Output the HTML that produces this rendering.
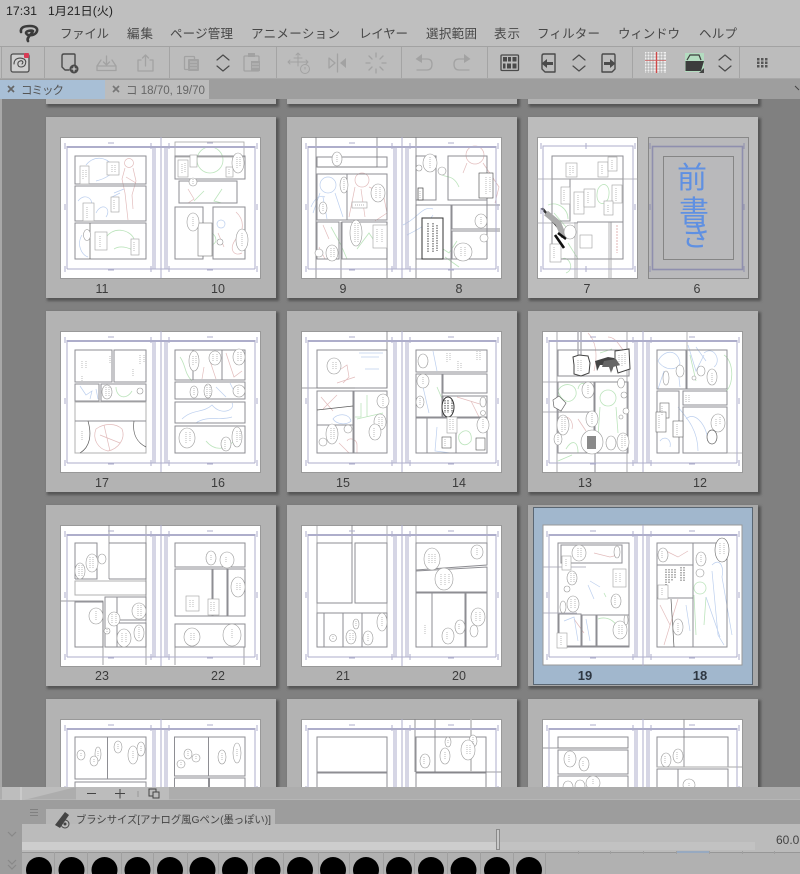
<!DOCTYPE html>
<html lang="ja"><head><meta charset="utf-8"><title>コミック</title>
<style>
html,body{margin:0;padding:0;width:800px;height:874px;overflow:hidden;background:#808080}
svg{display:block;position:absolute;left:0;top:0;font-family:"Liberation Sans","Noto Sans CJK JP",sans-serif;filter:blur(.35px)}
.p{fill:none;stroke:#8e8e93;stroke-width:1}
.pw{fill:#fff;stroke:#8e8e93;stroke-width:1}
.f{fill:none;stroke:#aeaecb;stroke-width:1}
.d{fill:none;stroke:#7c7c81;stroke-width:.8}
.k{fill:none;stroke:#5c5c5c;stroke-width:.7}
.b{fill:#fff;stroke:#9a9a9a;stroke-width:.6}
.bx{fill:#fff;stroke:#a0a0a0;stroke-width:.6}
.bk{fill:#fff;stroke:#333;stroke-width:1}
.r{fill:none;stroke:#e2bcbc;stroke-width:.7}
.g{fill:none;stroke:#bce4bc;stroke-width:.8}
.u{fill:none;stroke:#bccfee;stroke-width:.7}
.t{fill:none;stroke:#808080;stroke-width:.7;stroke-dasharray:.8 1.200}
.l{fill:#3c3c3c;font-size:12.500px;text-anchor:middle}
.m{fill:#474747;font-size:12.500px}
.i{fill:none;stroke:#4a4a4a;stroke-width:1.400;stroke-linecap:round;stroke-linejoin:round}
.o{fill:none;stroke:#a2a2a2;stroke-width:1.300;stroke-linecap:round;stroke-linejoin:round}
.c{fill:#000}
</style></head><body>
<svg width="800" height="874" viewBox="0 0 800 874" xmlns="http://www.w3.org/2000/svg">
<defs>
<filter id="s" x="-5%" y="-5%" width="110%" height="110%"><feGaussianBlur stdDeviation="1.200"/></filter>
<g id="card"><rect x="1" y="1" width="232" height="183" fill="#555" filter="url(#s)"/><rect x="0" y="0" width="230" height="181" fill="#b3b3b3"/></g>
<g id="pg"><rect x="14.500" y="20.500" width="200" height="141" fill="#fff" stroke="#999"/></g>
<g id="fr">
<path class="f" d="M21 29.500H209M21 30.500H209M21 152H209M107 29V152M109 29V152M119 29V152M121 29V152M21 29V152M209 29V152M115 20V161"/>
<path class="f" d="M19 26V32M105 26V32M123 26V32M211 26V32M19 149V155M105 149V155M123 149V155M211 149V155M62 26H68M161 26H167M62 153H68M161 153H167M19 87V93M211 87V93"/>
</g>
<g id="ch"><path class="i" d="M-6 -3L0 -8L6 -3M-6 3L0 8L6 3" style="stroke-width:1.200"/></g>
</defs>

<!-- canvas -->
<rect x="0" y="99" width="800" height="690" fill="#808080"/>
<rect x="0" y="99" width="2" height="690" fill="#a8a8a8"/>
<use href="#card" x="46" y="-77"/><use href="#card" x="287" y="-77"/><use href="#card" x="528" y="-77"/>

<!-- 11 / 10 -->
<g transform="translate(46,117)"><use href="#card"/><use href="#pg"/>
<path class="u" d="M40 48C48 38 60 40 66 48C72 56 58 62 50 64M68 76L78 72M32 84C40 74 50 84 44 92M50 96C56 84 66 92 60 100M36 118C30 128 36 138 42 140"/>
<circle class="r" cx="83" cy="46" r="4.500"/><path class="r" d="M79 51L76 62L79 76L82 103M87 51L90 64L86 78L87 92M80 60L90 66"/>
<path class="g" d="M60 120C70 108 85 114 88 122M68 132C74 128 86 130 92 138"/><path class="u" d="M66 80L74 76"/>
<rect class="p" x="29" y="39" width="71" height="28"/><rect class="p" x="29" y="69" width="71" height="35"/><rect class="p" x="29" y="106" width="71" height="36"/><path class="k" d="M44 106V142"/>
<rect class="bx" x="34" y="49" width="9" height="18"/><rect class="bx" x="61" y="45" width="12" height="13"/><rect class="bx" x="65" y="80" width="8" height="15"/><rect class="bx" x="37" y="86" width="11" height="18"/><rect class="bx" x="49" y="115" width="12" height="18"/><rect class="bx" x="85" y="122" width="8" height="16"/>
<ellipse class="b" cx="41" cy="118" rx="3.500" ry="5.500"/>
<path class="t" d="M37 53V63M40 53V61M66 48V55M69 48V55M68 83V92M41 90V101M54 119V130M88 125V135"/>
<circle class="g" cx="164" cy="43" r="13"/><path class="g" d="M148 84L158 74M176 72L168 84L176 86M160 118C164 112 170 118 170 124C166 132 158 128 160 118Z"/>
<path class="r" d="M190 95C198 102 199 114 190 122C182 132 188 140 196 136"/><circle class="u" cx="175" cy="107" r="4"/><path class="r" d="M142 72L148 82L142 86M172 116L178 130"/>
<rect class="d" x="129" y="25" width="69" height="15" style="stroke:#a5a5a5"/>
<rect class="p" x="129" y="39" width="70" height="23"/><rect class="p" x="133" y="64" width="58" height="22"/><rect class="p" x="129" y="90" width="28" height="52"/><rect class="p" x="167" y="90" width="32" height="52"/>
<rect class="bx" x="132" y="43" width="10" height="17"/><rect class="bx" x="144" y="38" width="7" height="12"/><rect class="bx" x="180" y="50" width="7" height="10"/><rect class="bx" x="152" y="106" width="14" height="33" style="stroke:#777"/>
<ellipse class="b" cx="192" cy="46" rx="6" ry="10"/><circle class="b" cx="147" cy="65" r="4"/><ellipse class="b" cx="147" cy="105" rx="6" ry="9"/><ellipse class="b" cx="196" cy="123" rx="6" ry="11"/><circle class="b" cx="174" cy="125" r="3"/>
<path class="t" d="M191 40V52M194 40V50M147 62V68M147 100V110M196 116V130M136 47V57M139 46V56M183 52V58"/>
<use href="#fr"/><text class="l" x="56" y="176">11</text><text class="l" x="172" y="176">10</text></g>

<!-- 9 / 8 -->
<g transform="translate(287,117)"><use href="#card"/><use href="#pg"/>
<circle class="u" cx="41" cy="68" r="8"/><path class="u" d="M33 76L26 96M48 76L56 100M36 80L40 102M24 90C28 80 34 78 38 80"/>
<circle class="r" cx="75" cy="63" r="7"/><path class="r" d="M68 70L62 100M82 70L96 76L100 96L88 104M74 72L78 100"/>
<path class="g" d="M44 110L54 128L60 142M70 132L82 116L90 128"/><path class="r" d="M36 108L42 122M32 130L38 142"/>
<rect class="p" x="30" y="40" width="70" height="10"/><rect class="p" x="30" y="57" width="70" height="46"/><path class="p" d="M60 57V103"/><rect class="p" x="30" y="105" width="22" height="37"/><rect class="p" x="55" y="105" width="45" height="37"/>
<path class="d" d="M29 20V161M54 105V161M90 20V50H30M100 105V161"/>
<ellipse class="b" cx="50" cy="42" rx="5" ry="7"/><ellipse class="b" cx="57" cy="68" rx="4" ry="8"/><ellipse class="b" cx="36" cy="91" rx="4" ry="6"/><ellipse class="b" cx="91" cy="76" rx="7" ry="9"/><ellipse class="b" cx="45" cy="136" rx="6" ry="8"/><circle class="b" cx="32" cy="136" r="4"/><ellipse class="b" cx="69" cy="116" rx="6" ry="13"/>
<rect class="bx" x="86" y="108" width="14" height="23"/><rect class="bx" x="65" y="85" width="15" height="6"/>
<path class="t" d="M50 38V46M57 62V74M36 87V95M89 70V82M93 70V82M44 131V141M47 131V141M68 106V126M71 106V126M90 112V126M95 112V126M68 88H78"/>
<circle class="r" cx="188" cy="38" r="9"/><path class="r" d="M180 46L176 56M196 46L212 70L208 86"/><path class="g" d="M152 56C158 62 166 56 172 70M150 128L162 136L170 124M158 140L172 150"/><path class="u" d="M116 108C130 102 136 88 146 92M120 118C132 112 140 108 146 98"/>
<rect class="p" x="129" y="39" width="20" height="44"/><rect class="p" x="161" y="39" width="39" height="44"/><rect class="p" x="129" y="88" width="35" height="54"/><path class="p" d="M213 88H165V112H213M213 114H165V142H200M200 39V142"/>
<path class="d" d="M129 20V161M164 142V161"/>
<ellipse class="b" cx="143" cy="46" rx="7" ry="9"/><circle class="b" cx="132" cy="51" r="3"/><circle class="b" cx="155" cy="54" r="4"/><rect class="bx" x="192" y="56" width="14" height="25" style="stroke:#444"/><rect x="135" y="101" width="21" height="41" fill="#fff" stroke="#333" stroke-width="1"/><rect x="131" y="71" width="5" height="12" fill="#fff" stroke="#444" stroke-width=".7"/>
<ellipse class="b" cx="194" cy="104" rx="6" ry="7"/><circle class="b" cx="197" cy="121" r="4"/><ellipse class="b" cx="176" cy="135" rx="9" ry="9"/>
<path class="t" d="M143 40V52M199 60V78M203 60V76M133 74V81M174 130V140M178 130V140M194 100V108"/>
<path d="M141 106V136M146 106V136M150 108V134" fill="none" stroke="#333" stroke-width=".9" stroke-dasharray="1.500 1"/>
<use href="#fr"/><text class="l" x="56" y="176">9</text><text class="l" x="172" y="176">8</text></g>

<!-- 7 / 6 -->
<g transform="translate(528,117)"><rect x="1" y="1" width="232" height="183" fill="#555" filter="url(#s)"/><rect width="230" height="181" fill="#bcbcbc"/>
<rect x="9.500" y="20.500" width="100" height="141" fill="#fff" stroke="#999"/><rect x="120.500" y="20.500" width="100" height="141" fill="#b9b9bb" stroke="#888"/>
<path class="g" d="M20 88C30 84 40 92 40 102M26 96L38 110M70 72C76 62 84 70 80 82C74 92 66 84 70 72M40 126L50 142M34 142C40 138 48 152 38 156"/>
<rect class="p" x="24" y="39" width="71" height="103"/><path class="p" d="M24 62H95M42 62V104H24M49 105H95M83 105V142"/>
<path class="d" d="M9 62H110M47 105V161M49 105V161M81 105V161M83 105V161M9 106H50" style="stroke:#a2a2a6"/>
<path d="M89 108V136" stroke="#e0b4b4" stroke-dasharray="2 1" fill="none"/>
<rect class="bx" x="38" y="46" width="11" height="14"/><rect class="bx" x="70" y="45" width="10" height="15"/><rect class="bx" x="80" y="40" width="9" height="14"/><rect class="bx" x="33" y="70" width="9" height="17"/><rect class="bx" x="46" y="75" width="10" height="22"/><rect class="bx" x="56" y="72" width="11" height="18"/><rect class="bx" x="84" y="68" width="10" height="18"/><rect class="bx" x="76" y="84" width="9" height="14"/><rect class="bx" x="52" y="118" width="12" height="13"/><rect class="bx" x="22" y="127" width="11" height="18"/>
<path class="t" d="M42 49V58M45 49V57M74 48V58M84 43V52M36 73V84M50 78V94M60 75V87M88 71V84M80 88V95M26 130V142"/>
<path d="M14 91L24 103L30 110" stroke="#333" stroke-width="2.500" fill="none"/><path d="M18 96L30 106L36 120" stroke="#aaa" stroke-width="6" fill="none"/><path d="M30 116L38 122M27 118L36 131" stroke="#111" stroke-width="2.600" fill="none"/><ellipse class="b" cx="42" cy="115" rx="6" ry="7"/>
<g class="f"><rect x="15" y="29" width="90" height="123"/><path d="M13 91V97M107 87V93M58 26V32M58 149V155M13 26V32M107 26V32M13 149V155M107 149V155"/></g>
<g style="stroke:#8f8fae;fill:none"><rect x="124.500" y="29.500" width="90" height="123" stroke-width="1.600"/><rect x="135.500" y="39.500" width="70" height="103" stroke="#858585"/><path d="M122 26V32M216 26V32M122 149V155M216 149V155M122 87V93M216 87V93"/></g>
<g fill="#5f90e2" font-size="30" text-anchor="middle" style="font-weight:400;font-family:'Noto Sans CJK JP','WenQuanYi Zen Hei',sans-serif"><text x="164" y="71">前</text><text x="166" y="105">書</text><text x="168" y="129">き</text></g>
<text class="l" x="59" y="176">7</text><text class="l" x="169" y="176">6</text></g>

<!-- 17 / 16 -->
<g transform="translate(46,311)"><use href="#card"/><use href="#pg"/>
<path class="u" d="M34 75L40 84L46 80L44 88M50 78L52 88"/><path class="g" d="M70 76C70 86 80 90 86 80"/><path class="r" d="M50 118C58 112 70 112 76 118C80 128 72 138 62 140C52 138 46 128 50 118ZM54 124L74 132M58 114L64 140"/>
<rect class="p" x="29" y="39" width="37" height="32"/><rect class="p" x="68" y="39" width="32" height="32"/><rect class="p" x="29" y="73" width="24" height="17"/><rect class="p" x="55" y="73" width="45" height="17"/><rect class="p" x="29" y="91" width="71" height="51" style="stroke:#b0b0b0"/>
<path class="p" d="M29 110H100"/><path class="k" d="M42 110C46 124 44 136 34 142M88 110C86 124 92 132 100 136"/>
<ellipse class="b" cx="61" cy="81" rx="5" ry="7"/><circle class="b" cx="94" cy="80" r="3"/>
<path class="t" d="M36 50V58M40 50V58M64 45V52M94 44V54M98 44V52M87 58V66M36 65V70M60 76V86M63 76V86M36 120V130"/>
<path class="u" d="M136 108C146 98 158 102 166 94C176 106 190 98 186 92M150 112C160 104 176 110 186 106"/><path class="g" d="M134 46C140 54 138 62 146 70M160 130C170 142 184 138 190 126"/><path class="r" d="M158 56L156 68M164 50L170 68M180 42L188 66L196 60"/><path class="u" d="M170 76L180 86M184 72L190 84"/>
<rect class="p" x="129" y="39" width="70" height="30"/><path class="p" d="M147 39V69M176 39V69"/><rect class="p" x="129" y="71" width="70" height="17"/><rect class="p" x="129" y="91" width="70" height="21"/><rect class="p" x="129" y="115" width="70" height="27"/>
<ellipse class="b" cx="148" cy="50" rx="5" ry="10"/><ellipse class="b" cx="169" cy="47" rx="6" ry="7"/><ellipse class="b" cx="193" cy="46" rx="6" ry="8"/><ellipse class="b" cx="148" cy="81" rx="4" ry="6"/><ellipse class="b" cx="162" cy="80" rx="4" ry="7"/><ellipse class="b" cx="193" cy="80" rx="6" ry="6"/><ellipse class="b" cx="141" cy="127" rx="8" ry="10"/><ellipse class="b" cx="191" cy="126" rx="5" ry="10"/><ellipse class="b" cx="180" cy="133" rx="5" ry="7"/>
<path class="t" d="M147 45V55M150 45V53M167 43V51M171 43V51M192 41V50M195 41V50M148 77V85M161 74V85M164 74V85M192 76V84M140 121V132M144 121V130M191 120V132M194 120V130M179 129V138"/>
<use href="#fr"/><text class="l" x="56" y="176">17</text><text class="l" x="172" y="176">16</text></g>

<!-- 15 / 14 -->
<g transform="translate(287,311)"><use href="#card"/><use href="#pg"/>
<path class="r" d="M54 58L60 54L62 66L56 72M50 72L68 66M34 86L46 100M50 84L36 98"/><path class="u" d="M46 108C50 102 62 102 64 110C60 114 50 114 46 108Z"/><path class="g" d="M74 92V106H68M80 84V106M70 108L96 102"/><path class="r" d="M60 130C62 126 70 128 70 134V142M52 132L62 142"/><path class="u" d="M72 42H96M74 46H92M78 58H92"/>
<rect class="p" x="30" y="39" width="70" height="38"/><rect class="p" x="30" y="80" width="36" height="62"/><path class="k" d="M30 99L66 95"/><path class="p" d="M30 114H66"/><rect class="p" x="67" y="80" width="33" height="62"/>
<path class="d" d="M15 77H68M100 20V77"/>
<ellipse class="b" cx="47" cy="55" rx="7" ry="8"/><ellipse class="b" cx="96" cy="90" rx="6" ry="7"/><ellipse class="b" cx="93" cy="111" rx="6" ry="8"/><ellipse class="b" cx="88" cy="121" rx="6" ry="8"/><ellipse class="b" cx="45" cy="123" rx="6" ry="10"/><circle class="b" cx="36" cy="131" r="4"/><circle class="b" cx="61" cy="118" r="4"/>
<path class="t" d="M46 51V59M49 51V59M96 86V95M92 106V116M95 106V116M87 117V126M44 117V129M47 117V129"/>
<path class="u" d="M146 40L150 60M136 76L142 102M150 116L148 140L164 142"/><path class="g" d="M150 76L156 90M172 124C178 116 186 120 184 130C178 138 170 132 172 124Z"/><path class="r" d="M170 86L196 94M184 90L192 106"/>
<rect class="p" x="129" y="39" width="71" height="22"/><rect class="p" x="129" y="63" width="26" height="43"/><rect class="p" x="156" y="63" width="44" height="19"/><rect class="p" x="156" y="85" width="44" height="21"/><rect class="p" x="129" y="107" width="11" height="35"/><rect class="p" x="140" y="107" width="29" height="35"/><rect class="p" x="169" y="107" width="31" height="35"/>
<ellipse class="b" cx="136" cy="70" rx="6" ry="7"/><ellipse class="b" cx="133" cy="91" rx="4" ry="6"/><ellipse cx="161" cy="96" rx="6" ry="10" class="bk"/><ellipse class="b" cx="196" cy="91" rx="3" ry="5"/><ellipse class="b" cx="196" cy="114" rx="6" ry="8"/><ellipse class="b" cx="136" cy="50" rx="5" ry="7"/><circle class="b" cx="196" cy="102" r="2.500"/>
<rect class="bx" x="160" y="106" width="10" height="16"/><rect class="bx" x="155" y="126" width="9" height="11" style="stroke:#555"/><rect class="bx" x="189" y="127" width="9" height="12" style="stroke:#555"/>
<path class="t" d="M163 108V120M166 108V120M196 108V118M158 128V135M160 42V52M163 42V50M190 40V50M193 40V50M171 50V60M174 52V58M136 66V74M133 87V95"/>
<path d="M158 89V102M161 89V102M165 89V102" fill="none" stroke="#333" stroke-width=".9" stroke-dasharray="1.500 1"/>
<use href="#fr"/><text class="l" x="56" y="176">15</text><text class="l" x="172" y="176">14</text></g>

<!-- 13 / 12 -->
<g transform="translate(528,311)"><use href="#card"/><use href="#pg"/>
<circle class="g" cx="80" cy="87" r="8"/><path class="g" d="M72 96L70 126M88 96L90 122M30 80C34 70 50 72 48 84C44 94 34 92 30 80ZM50 78C52 68 62 72 62 84M38 138C44 128 50 130 50 142M30 150L44 144"/><path class="r" d="M60 22C68 30 70 44 66 60M50 108L58 120M30 108C40 102 46 110 44 118M80 26C88 26 92 36 96 40"/><path class="g" d="M72 42L84 38"/>
<rect class="p" x="30" y="39" width="71" height="26"/><rect class="p" x="30" y="71" width="36" height="30"/><rect class="p" x="67" y="71" width="33" height="71"/><rect class="p" x="30" y="101" width="36" height="41"/>
<path class="d" d="M29 20V161M99 20V161M15 71H66M15 101H66" style="stroke:#97979c"/><path d="M50 20V55M53 20V55M67 142V161" stroke="#a8a8ae" fill="none" stroke-width="1.300"/>
<path fill="#fff" stroke="#444" d="M45 46L51 44L60 45L62 52L61 62L53 65L46 63L46 54Z"/><path fill="#fff" stroke="#444" d="M87 40L101 38L102 58L90 62L87 50Z"/>
<path fill="#444" d="M67 50L80 46L86 47L90 54L86 54L84 60L82 54L72 54L69 60L68 54Z"/><path fill="#666" d="M76 50L88 48L92 54L85 56L83 62L81 56L74 56Z"/>
<ellipse class="b" cx="60" cy="79" rx="6" ry="8"/><ellipse class="b" cx="93" cy="72" rx="3.500" ry="5"/><circle class="b" cx="96" cy="84" r="3"/><circle class="b" cx="98" cy="100" r="3"/><circle class="b" cx="93" cy="106" r="2"/><ellipse class="b" cx="64" cy="108" rx="6" ry="8"/><ellipse class="b" cx="35" cy="114" rx="6" ry="10"/><ellipse class="b" cx="30" cy="128" rx="4" ry="6"/><ellipse class="b" cx="64" cy="131" rx="11" ry="12"/><ellipse class="b" cx="83" cy="132" rx="5" ry="7"/><ellipse class="b" cx="95" cy="131" rx="6" ry="9"/>
<path fill="#fff" stroke="#666" stroke-width=".7" d="M31 85L38 92L33 100L26 96L25 89Z"/>
<path class="t" d="M50 49V60M53 49V60M91 44V56M94 44V56M97 42V54M60 74V84M64 102V114M34 106V122M37 106V120M30 124V132M94 124V138M97 124V136"/><rect x="59" y="125" width="9" height="13" fill="#8a8a8a"/>
<path class="u" d="M130 50C136 38 150 38 152 52C150 60 136 60 130 50ZM136 60L130 78M150 58L152 76M160 34L168 60L176 44M168 36L178 50M132 130C136 124 144 128 142 136"/><path class="u" d="M158 108C166 100 178 112 180 130M150 96C160 108 170 120 170 140"/><path class="g" d="M162 44L168 70M196 44C206 50 206 74 198 80"/><path class="u" d="M176 42C186 34 194 50 186 56"/>
<rect class="p" x="129" y="39" width="29" height="39"/><rect class="p" x="159" y="39" width="40" height="39"/><rect class="p" x="129" y="80" width="22" height="62"/><rect class="p" x="155" y="80" width="44" height="14"/><rect class="p" x="155" y="96" width="44" height="46"/>
<path class="d" d="M159 20V40M199 142H214" style="stroke:#a2a2a6"/>
<ellipse class="b" cx="152" cy="60" rx="4" ry="6"/><ellipse class="b" cx="173" cy="60" rx="4" ry="5"/><ellipse class="b" cx="184" cy="66" rx="5" ry="8"/><circle class="b" cx="166" cy="67" r="2"/><ellipse class="b" cx="138" cy="67" rx="3" ry="7"/><ellipse class="b" cx="190" cy="112" rx="7" ry="9"/><ellipse cx="184" cy="126" rx="5" ry="7" fill="#fff" stroke="#666" stroke-width=".7"/>
<rect class="bx" x="132" y="92" width="9" height="15" style="stroke:#666"/><rect class="bx" x="128" y="101" width="10" height="20" style="stroke:#666"/><rect class="bx" x="145" y="110" width="10" height="16" style="stroke:#666"/>
<path class="t" d="M158 84V91M161 84V91M134 95V104M131 104V118M149 113V124M188 108V116M192 106V114M184 62V72"/>
<use href="#fr"/><text class="l" x="57" y="176">13</text><text class="l" x="172" y="176">12</text></g>

<!-- 23 / 22 -->
<g transform="translate(46,505)"><use href="#card"/><use href="#pg"/>
<path class="p" d="M29 74V38H51V74H29M63 74H100V38H63"/><rect class="p" x="29" y="76" width="71" height="14" style="stroke:#b0b0b0"/><rect class="p" x="29" y="97" width="28" height="45"/><rect class="p" x="59" y="92" width="12" height="50"/><rect class="p" x="71" y="92" width="29" height="23"/><rect class="p" x="71" y="118" width="29" height="24"/>
<path class="d" d="M63 20V74M15 96H57V160M100 20V160" style="stroke-width:.7"/>
<ellipse class="b" cx="46" cy="58" rx="6" ry="9"/><ellipse class="b" cx="56" cy="54" rx="4" ry="5"/><ellipse class="b" cx="34" cy="66" rx="5" ry="8"/><ellipse class="b" cx="50" cy="111" rx="7" ry="8"/><ellipse class="b" cx="68" cy="114" rx="6" ry="7"/><circle class="b" cx="61" cy="126" r="3"/><ellipse class="b" cx="78" cy="133" rx="7" ry="9"/><ellipse class="b" cx="93" cy="128" rx="5" ry="8"/><ellipse class="b" cx="93" cy="106" rx="7" ry="8"/>
<path class="t" d="M44 52V64M47 52V64M33 60V72M36 60V72M50 106V116M66 109V119M70 109V119M76 128V138M80 128V138M93 122V134M92 100V112M95 100V112M61 124V128"/>
<rect class="p" x="129" y="38" width="70" height="24"/><rect class="p" x="129" y="64" width="37" height="47"/><rect class="p" x="167" y="64" width="14" height="47"/><rect class="p" x="182" y="64" width="17" height="47"/><rect class="p" x="129" y="119" width="70" height="23"/>
<path class="d" d="M129 142V160M198 142V160" style="stroke-width:.7"/>
<ellipse class="b" cx="165" cy="53" rx="5" ry="7"/><ellipse class="b" cx="181" cy="55" rx="7" ry="8"/><ellipse class="b" cx="192" cy="82" rx="7" ry="10"/><ellipse class="b" cx="146" cy="132" rx="8" ry="9"/><ellipse class="b" cx="186" cy="130" rx="9" ry="11"/>
<rect class="bx" x="140" y="91" width="13" height="15"/><rect class="bx" x="162" y="94" width="11" height="16"/>
<path class="t" d="M165 50V56M180 52V58M191 78V86M194 78V86M145 128V136M148 128V136M186 124V134M144 95V102M147 95V102M165 97V107M168 97V107"/>
<use href="#fr"/><text class="l" x="56" y="175">23</text><text class="l" x="172" y="175">22</text></g>

<!-- 21 / 20 -->
<g transform="translate(287,505)"><use href="#card"/><use href="#pg"/>
<rect class="p" x="30" y="38" width="35" height="60"/><rect class="p" x="68" y="38" width="32" height="60"/><rect class="p" x="30" y="108" width="7" height="34"/><rect class="p" x="37" y="108" width="19" height="34"/><rect class="p" x="56" y="108" width="19" height="34"/><rect class="p" x="75" y="108" width="25" height="34"/>
<path class="d" d="M65 20V38"/><path d="M30 20V108M100 20V108" stroke="#8f8f94" fill="none" stroke-width=".7"/>
<circle class="b" cx="46" cy="133" r="3.500"/><ellipse class="b" cx="69" cy="119" rx="3" ry="5"/><ellipse class="b" cx="64" cy="132" rx="5" ry="7"/><ellipse class="b" cx="81" cy="133" rx="5" ry="7"/><ellipse class="b" cx="95" cy="117" rx="5" ry="9"/>
<path class="t" d="M46 131V135M69 116V122M63 128V136M66 128V136M81 129V137M95 112V122"/>
<path class="p" d="M129 38H200V60L129 65ZM129 66L200 62V87H129Z"/><rect class="p" x="129" y="88" width="16" height="54"/><rect class="p" x="145" y="88" width="33" height="54"/><rect class="p" x="179" y="88" width="21" height="54"/>
<path d="M129 20V38M200 20V38" stroke="#8f8f94" fill="none" stroke-width=".7"/>
<ellipse class="b" cx="145" cy="54" rx="8" ry="11"/><ellipse class="b" cx="157" cy="74" rx="9" ry="11"/><ellipse class="b" cx="190" cy="47" rx="6" ry="7"/><ellipse class="b" cx="191" cy="112" rx="7" ry="9"/><ellipse class="b" cx="187" cy="126" rx="4" ry="6"/><ellipse class="b" cx="173" cy="122" rx="5" ry="7"/><ellipse class="b" cx="161" cy="131" rx="6" ry="8"/>
<path class="t" d="M142 49V59M145 49V59M148 49V59M154 69V80M158 69V80M162 69V78M190 43V51M189 107V117M193 107V117M172 119V125M160 127V135M138 120V130"/>
<use href="#fr"/><text class="l" x="56" y="175">21</text><text class="l" x="172" y="175">20</text></g>

<!-- 19 / 18 selected -->
<g transform="translate(528,505)"><rect x="1" y="1" width="232" height="183" fill="#555" filter="url(#s)"/><rect width="230" height="181" fill="#a8a8a8"/><rect x="5.500" y="2.500" width="219" height="177" fill="#a1b7cd" stroke="#5a6672"/>
<rect x="15" y="20" width="199" height="140" fill="#fff" stroke="#999"/>
<path class="u" d="M60 80L66 94M62 76L72 82"/><path class="g" d="M70 114C80 110 92 118 90 130M76 88L78 92"/><path class="r" d="M66 48L82 52L90 50M46 114L56 128"/><path class="u" d="M36 116L46 112L50 136M58 114L62 136"/>
<rect class="p" x="30" y="38" width="71" height="104"/><rect class="p" x="33" y="40" width="61" height="18"/><rect class="p" x="31" y="109" width="22" height="32"/><rect class="p" x="54" y="110" width="14" height="31"/><rect class="p" x="69" y="110" width="32" height="31"/>
<path class="d" d="M15 62H58M15 108H49" style="stroke:#a0a0b0"/>
<ellipse class="b" cx="51" cy="48" rx="7" ry="8"/><ellipse class="b" cx="89" cy="47" rx="3" ry="6"/><ellipse class="b" cx="44" cy="73" rx="5" ry="7"/><circle class="b" cx="39" cy="84" r="3"/><ellipse class="b" cx="45" cy="99" rx="6" ry="8"/><ellipse class="b" cx="35" cy="102" rx="3" ry="6"/><ellipse class="b" cx="88" cy="96" rx="5" ry="7"/><ellipse class="b" cx="92" cy="125" rx="7" ry="9"/><ellipse class="b" cx="98" cy="115" rx="2" ry="5"/>
<rect class="bx" x="34" y="51" width="9" height="14"/><rect class="bx" x="85" y="64" width="13" height="18"/><rect class="bx" x="29" y="128" width="10" height="15"/>
<path class="t" d="M50 43V52M53 43V52M38 54V62M88 68V78M92 68V78M43 68V78M46 68V78M43 94V104M47 94V104M87 91V101M91 120V130M94 120V130M33 131V140"/>
<circle class="g" cx="172" cy="83" r="6"/><path class="r" d="M132 100L142 120M150 94L136 140M138 46L150 52L160 46"/><path class="g" d="M166 90L168 130M178 92L176 120"/>
<path class="u" d="M184 60C192 52 196 62 194 72L204 130M184 66L190 130L196 140M178 92L192 132M158 100L162 126"/>
<rect class="p" x="129" y="38" width="70" height="104"/><path class="p" d="M165 38V142M129 60H165M129 93H165"/><path class="k" d="M143 94L146 142"/>
<ellipse class="b" cx="135" cy="50" rx="5" ry="7"/><ellipse class="b" cx="173" cy="54" rx="5" ry="7"/><circle class="b" cx="172" cy="68" r="4"/><ellipse class="b" cx="194" cy="45" rx="7" ry="12" style="stroke:#666"/><ellipse class="b" cx="150" cy="122" rx="5" ry="8"/>
<rect class="bx" x="130" y="80" width="10" height="14"/>
<path d="M138 64V80M141 64V78M144 64V76M147 64V74M153 62V76M156 62V76" stroke="#444" stroke-dasharray="1.500 1" fill="none" stroke-width=".8"/>
<path class="t" d="M134 46V54M173 50V58M192 38V50M196 38V50M150 118V128M134 83V91"/>
<use href="#fr"/><g font-weight="700" fill="#2e3742" font-size="13" text-anchor="middle"><text x="57" y="175">19</text><text x="172" y="175">18</text></g></g>

<!-- row 4 -->
<g transform="translate(46,699)"><use href="#card"/><use href="#pg"/>
<rect class="p" x="29" y="38" width="32.500" height="42"/><rect class="p" x="61.500" y="38" width="38.500" height="42"/><rect class="p" x="29" y="83" width="71" height="30"/>
<rect class="p" x="128.500" y="38" width="34" height="39"/><rect class="p" x="162.500" y="38" width="36.500" height="39"/><rect class="p" x="128.500" y="79" width="34" height="30"/><rect class="p" x="163.500" y="79" width="35.500" height="30"/>
<ellipse class="b" cx="35" cy="56" rx="4" ry="5"/><ellipse class="b" cx="52" cy="55" rx="3" ry="7"/><ellipse class="b" cx="48" cy="62" rx="4" ry="5"/><ellipse class="b" cx="72" cy="48" rx="4" ry="6"/><ellipse class="b" cx="87" cy="56" rx="5" ry="9"/><ellipse class="b" cx="95" cy="50" rx="4" ry="7"/><ellipse class="b" cx="142" cy="55" rx="4" ry="5"/><circle class="b" cx="150" cy="59" r="4"/><circle class="b" cx="135" cy="65" r="4"/><ellipse class="b" cx="176" cy="58" rx="4" ry="7"/><ellipse class="b" cx="191" cy="54" rx="4" ry="10"/>
<path class="t" d="M35 54V58M52 52V58M48 60V64M72 45V51M87 52V60M95 47V53M142 52V58M150 57V61M135 63V67M176 54V62M191 50V58"/>
<use href="#fr"/></g>
<g transform="translate(287,699)"><use href="#card"/><use href="#pg"/>
<rect class="p" x="30" y="38" width="70" height="35"/><rect class="p" x="30" y="74" width="70" height="40"/>
<rect class="p" x="129" y="38" width="70" height="35"/><rect class="p" x="129" y="74" width="70" height="40"/>
<path class="d" d="M148 20V73M128 20V73M129 73H214"/><path d="M184 20V73" stroke="#bbb" fill="none" stroke-width="1.500"/>
<ellipse class="b" cx="161" cy="43" rx="3" ry="5"/><ellipse class="b" cx="186" cy="42" rx="4" ry="6"/><ellipse class="b" cx="181" cy="51" rx="7" ry="10"/><ellipse class="b" cx="158" cy="57" rx="5" ry="8"/><ellipse class="b" cx="138" cy="62" rx="5" ry="7"/>
<path class="t" d="M161 41V45M186 38V46M180 46V56M183 46V56M158 53V61M137 58V66"/>
<use href="#fr"/></g>
<g transform="translate(528,699)"><use href="#card"/><use href="#pg"/>
<rect class="p" x="30" y="38" width="70" height="11"/><rect class="p" x="30" y="51" width="70" height="24"/><rect class="p" x="30" y="77" width="70" height="30"/>
<rect class="p" x="129" y="38" width="71" height="30"/><rect class="p" x="129" y="70" width="21" height="30"/><rect class="p" x="150" y="70" width="50" height="30"/>
<path class="d" d="M15 49H100M156 20V68"/><path d="M129 68H214" stroke="#aaa" fill="none"/>
<ellipse class="b" cx="42" cy="60" rx="6" ry="8"/><ellipse class="b" cx="56" cy="65" rx="5" ry="7"/><ellipse class="b" cx="65" cy="84" rx="7" ry="7"/><ellipse class="b" cx="52" cy="87" rx="5" ry="6"/><ellipse class="b" cx="40" cy="88" rx="5" ry="6"/><ellipse class="b" cx="138" cy="61" rx="5" ry="7"/><ellipse class="b" cx="150" cy="57" rx="5" ry="7"/><circle class="b" cx="161" cy="86" r="6"/>
<path class="t" d="M41 56V64M55 62V68M65 80V86M137 57V65M149 53V61M161 84V88"/>
<use href="#fr"/></g>

<!-- top bars -->
<rect x="0" y="0" width="800" height="46" fill="#bfbfbf"/>
<text x="6" y="15" font-size="11.500" fill="#222" textLength="31" lengthAdjust="spacingAndGlyphs">17:31</text>
<text x="48" y="15" font-size="11.500" fill="#222" textLength="65" lengthAdjust="spacingAndGlyphs">1月21日(火)</text>
<path d="M21 32C20 27 25 26 30 26C36 26 39 29 36 33C33 36 27 36 26 33C26 31 31 30 33 31C31 35 26 38 28 41" fill="none" stroke="#3b3b3b" stroke-width="2.600" stroke-linecap="round" stroke-linejoin="round"/>
<g class="m">
<text x="60" y="38" textLength="49" lengthAdjust="spacing">ファイル</text>
<text x="127" y="38" textLength="26">編集</text>
<text x="170" y="38" textLength="63">ページ管理</text>
<text x="251" y="38" textLength="89">アニメーション</text>
<text x="359" y="38" textLength="49">レイヤー</text>
<text x="426" y="38" textLength="51">選択範囲</text>
<text x="494" y="38" textLength="26">表示</text>
<text x="537" y="38" textLength="63">フィルター</text>
<text x="618" y="38" textLength="62">ウィンドウ</text>
<text x="699" y="38" textLength="38">ヘルプ</text>
</g>

<!-- toolbar -->
<rect x="0" y="46" width="800" height="33" fill="#bcbcbc"/>
<rect x="0" y="46" width="800" height="1" fill="#a2a2a2"/>
<rect x="0" y="78" width="800" height="1" fill="#a8a8a8"/>
<path d="M1.500 47V78M44.500 47V78M169.500 47V78M276.500 47V78M401.500 47V78M487.500 47V78M632.500 47V78M739.500 47V78" stroke="#a4a4a4" fill="none"/>
<!-- app icon -->
<rect x="11" y="54" width="18" height="18" rx="2" fill="#d0d0d0" stroke="#4d4d4d" stroke-width="1.300"/>
<path class="i" style="stroke-width:1.100" d="M14 64C14 58 20 57 24 59C27 61 26 67 21 67C17 67 17 62 20 61C22 60 24 62 22 64"/>
<rect x="24" y="53" width="5" height="5" rx="1" fill="#d83c56"/>
<!-- new page -->
<path class="i" d="M64 54H74Q75 54 75 55V65M62 56V67L65 70H69M62 56Q62 54 64 54"/>
<circle cx="74" cy="69" r="4.500" fill="#4a4a4a"/><path d="M71.500 69H76.500M74 66.500V71.500" stroke="#ddd" stroke-width="1.100"/>
<!-- inbox -->
<path class="o" d="M101 60L97 66V70.500H116V66L112 60M97 66H116M106.500 56V64M103.500 62L106.500 65L109.500 62"/>
<!-- share -->
<path class="o" d="M141 60H138V71H153V60H150M145.500 66V55M142.500 58L145.500 55L148.500 58"/>
<!-- copy -->
<rect x="184.500" y="56.500" width="10" height="13" rx="1" fill="none" stroke="#a2a2a2" stroke-width="1.300"/><rect x="188" y="59" width="11" height="12" rx="1" fill="#a2a2a2"/><path d="M190 62H197M190 65H197M190 68H197" stroke="#bcbcbc"/>
<use href="#ch" x="223" y="63"/>
<!-- clipboard -->
<rect x="244" y="56" width="15" height="15" rx="1" fill="none" stroke="#a2a2a2" stroke-width="1.300"/><rect x="248" y="53" width="7" height="4" fill="#a2a2a2"/><rect x="251" y="61" width="9" height="10" fill="#a2a2a2"/><path d="M252 64H259M252 67H259" stroke="#bcbcbc"/>
<!-- move -->
<path class="o" style="stroke-width:1" d="M298 53V66M288 62H308M296 55L298 53L300 55M290 60L288 62L290 64M306 60L308 62L306 64M294 58H302"/>
<circle cx="305" cy="69" r="4.500" fill="none" stroke="#a2a2a2"/><path d="M305 67V69.500" stroke="#a2a2a2"/>
<!-- flip -->
<path class="o" d="M337.500 54V72M329 58L335 63L329 68Z"/><path d="M346 58L340 63L346 68Z" fill="#a2a2a2"/>
<!-- spinner -->
<path class="o" d="M376 53V57M376 69V73M366 63H370M382 63H386M369 56L372 59M380 67L383 70M383 56L380 59M372 67L369 70"/>
<!-- undo / redo -->
<path class="o" d="M419 59H427Q432 59 432 64Q432 70 427 70H417"/><path d="M422 54L415.500 59L422 63Z" fill="#a2a2a2"/>
<path class="o" d="M467 59H459Q454 59 454 64Q454 70 459 70H469"/><path d="M464 54L470.500 59L464 63Z" fill="#a2a2a2"/>
<!-- page layout -->
<rect x="501" y="55" width="17.500" height="15.500" rx="1" fill="none" stroke="#4a4a4a" stroke-width="1.300"/><path fill="#4a4a4a" d="M503 57H507V61.500H503ZM508 57H511V61.500H508ZM512.500 57H516.500V61.500H512.500ZM503 63.500H505.500V68.500H503ZM507 63.500H511V68.500H507ZM512.500 63.500H516.500V68.500H512.500Z"/>
<!-- page left -->
<path class="i" d="M544 54H555V72H545L542 69V56Q542 54 544 54Z"/><path d="M553 62H547V59L541.500 63.500L547 68V65H553Z" fill="#4a4a4a"/>
<use href="#ch" x="579" y="63"/>
<!-- page right -->
<path class="i" d="M603 54H614Q615 54 615 56V69L612 72H602V56Q602 54 603 54Z"/><path d="M604 62H610V59L615.500 63.500L610 68V65H604Z" fill="#4a4a4a"/>
<!-- red grid -->
<rect x="645" y="52" width="21" height="21" fill="#efefef"/>
<path d="M645 54H666M645 57H666M645 60H666M645 63H666M645 66H666M645 69H666M645 72H666M647 52V73M650 52V73M653 52V73M660 52V73M663 52V73" stroke="#8a8a8a" stroke-width=".6" fill="none"/><path d="M656.500 52V73" stroke="#d04848" stroke-width="1.400"/><path d="M645 60.500H666" stroke="#d06060" stroke-width=".8"/>
<!-- folder -->
<rect x="685" y="53" width="19" height="19" fill="#b3dcc0"/>
<path d="M687 60L690 55H699L701 60" fill="none" stroke="#3c3c3c" stroke-width="1.200"/><path d="M685.500 61H704L701 71H685.500Z" fill="#3c3c3c"/><path d="M704 73H699L704 68Z" fill="#444"/>
<use href="#ch" x="725" y="63"/>
<!-- dots -->
<g fill="#565656"><rect x="757" y="58" width="2.500" height="2.500"/><rect x="761" y="58" width="2.500" height="2.500"/><rect x="765" y="58" width="2.500" height="2.500"/><rect x="757" y="61.500" width="2.500" height="2.500"/><rect x="761" y="61.500" width="2.500" height="2.500"/><rect x="765" y="61.500" width="2.500" height="2.500"/><rect x="757" y="65" width="2.500" height="2.500"/><rect x="761" y="65" width="2.500" height="2.500"/><rect x="765" y="65" width="2.500" height="2.500"/></g>

<!-- tabs -->
<rect x="0" y="79" width="800" height="20" fill="#9e9e9e"/>
<rect x="0" y="80" width="105" height="19" fill="#a8bfd6"/>
<rect x="105" y="80" width="104" height="19" fill="#bcbcbc"/>
<path d="M8 86L14 92M14 86L8 92" stroke="#666" stroke-width="1.700"/><path d="M113 86L119 92M119 86L113 92" stroke="#777" stroke-width="1.700"/>
<text x="21" y="94" font-size="11.500" fill="#555" textLength="43">コミック</text>
<text x="126" y="94" font-size="11.500" fill="#666" textLength="79" lengthAdjust="spacingAndGlyphs">コ 18/70, 19/70</text>
<path d="M795 86L799 90" stroke="#444" fill="none"/>

<!-- bottom bars -->
<rect x="0" y="787" width="800" height="13" fill="#adadad"/>
<rect x="0" y="799" width="800" height="1" fill="#b6b6b6"/>
<path d="M2 787H76L24 800H2Z" fill="#bdbdbd"/><path d="M20 787H22V800H20Z" fill="#cacaca"/>
<rect x="76" y="787" width="93" height="13" fill="#bcbcbc"/>
<path d="M87 793.500H96M115 793.500H125M120 789V798.500" stroke="#444" stroke-width="1" fill="none"/><path d="M138 791V797" stroke="#999"/>
<rect x="149" y="789" width="7" height="7" fill="none" stroke="#444"/><rect x="153" y="792" width="6" height="6" fill="#bcbcbc" stroke="#444"/>
<rect x="0" y="800" width="800" height="74" fill="#9d9d9d"/>
<rect x="22" y="824" width="778" height="28" fill="#bbbbbb"/>
<path d="M30 809.500H38M30 812.500H38M30 815.500H38" stroke="#808080" stroke-width="1"/>
<rect x="46" y="809" width="229" height="15" fill="#b8b8b8"/>
<path d="M55 825L65 812L69 815L60 828Z" fill="#444"/><circle cx="65" cy="824" r="4" fill="none" stroke="#444"/><circle cx="65" cy="824" r="1.500" fill="#444"/>
<text x="76" y="823" font-size="10.500" fill="#444" textLength="195" lengthAdjust="spacingAndGlyphs">ブラシサイズ[アナログ風Gペン(墨っぽい)]</text>
<path d="M8 832L12 836L16 832" stroke="#888" fill="none" stroke-width="1.200"/>
<path d="M8 860L12 864L16 860M8 865L12 869L16 865" stroke="#888" fill="none" stroke-width="1.200"/>
<rect x="22" y="842" width="733" height="8" fill="#c2c2c2"/>
<rect x="22" y="842" width="474" height="8" fill="#cdcdcd"/>
<rect x="496.500" y="829.500" width="3" height="20" fill="#c8c8c8" stroke="#8a8a8a"/>
<text x="776" y="844" font-size="12" fill="#444">60.0</text>
<rect x="22" y="852" width="778" height="22" fill="#b1b1b1"/>
<rect x="22" y="852" width="778" height="1" fill="#979797"/>
<rect x="676" y="851" width="33" height="2" fill="#97a9c0"/>
<path stroke="#a0a0a0" fill="none" d="M54.500 852V874M87.500 852V874M121.500 852V874M153.500 852V874M187.500 852V874M218.500 852V874M252.500 852V874M283.500 852V874M318.500 852V874M349.500 852V874M383.500 852V874M414.500 852V874M447.500 852V874M480.500 852V874M513.500 852V874M545.500 852V874M578.500 851V854M610.500 851V854M643.500 851V854M676.500 851V854M709.500 851V854M742.500 851V854M774.500 851V854"/>
<g class="c"><circle cx="39" cy="870" r="13"/><circle cx="71.500" cy="870" r="13"/><circle cx="104.500" cy="870" r="13"/><circle cx="137.500" cy="870" r="13"/><circle cx="170" cy="870" r="13"/><circle cx="202.500" cy="870" r="13"/><circle cx="235" cy="870" r="13"/><circle cx="267.500" cy="870" r="13"/><circle cx="300" cy="870" r="13"/><circle cx="333" cy="870" r="13"/><circle cx="366" cy="870" r="13"/><circle cx="399" cy="870" r="13"/><circle cx="431" cy="870" r="13"/><circle cx="463.500" cy="870" r="13"/><circle cx="497" cy="870" r="13"/><circle cx="529" cy="870" r="13"/></g>
</svg>
</body></html>
